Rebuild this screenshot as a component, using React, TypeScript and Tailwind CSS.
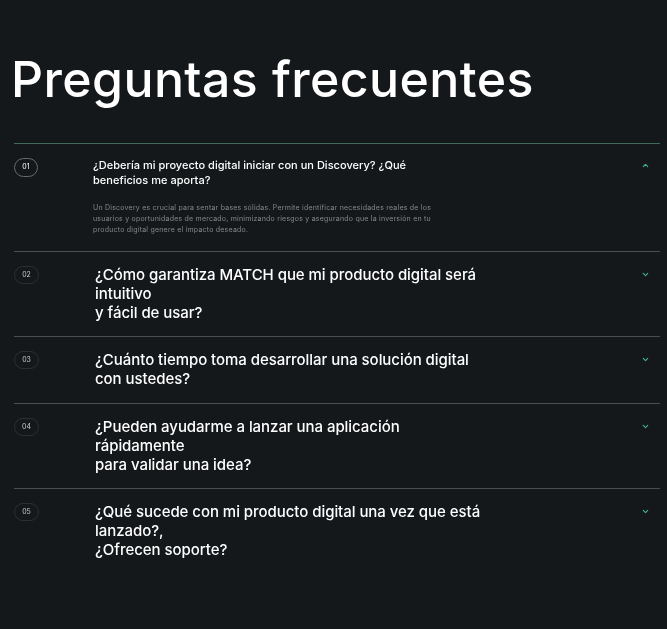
import { ChevronDown, ChevronUp } from 'lucide-react';

const FAQS = [
  { id: '02', lines: ['¿Cómo garantiza MATCH que mi producto digital será', 'intuitivo', 'y fácil de usar?'], h: 'h-[85px]' },
  { id: '03', lines: ['¿Cuánto tiempo toma desarrollar una solución digital', 'con ustedes?'], h: 'h-[67px]' },
  { id: '04', lines: ['¿Pueden ayudarme a lanzar una aplicación', 'rápidamente', 'para validar una idea?'], h: 'h-[85px]' },
  { id: '05', lines: ['¿Qué sucede con mi producto digital una vez que está', 'lanzado?,', '¿Ofrecen soporte?'], h: 'h-[85px]' },
];

export default function App() {
  return (
    <div className="w-[667px] h-[629px] overflow-hidden bg-[#14181b]">
      <div className="will-change-transform font-['Inter',sans-serif] text-white">
        <h1 className="pl-[11px] pt-[49px] h-[143px] text-[50px] leading-[60px] font-medium tracking-[0.4px]">Preguntas frecuentes</h1>

        <div className="ml-[14px] w-[646px]">
          <div className="h-[108px] border-t border-[#3d6b57] pt-[14px] flex">
            <div className="w-[79px] shrink-0">
              <span className="flex items-center justify-center w-6 h-[19px] rounded-full border border-[#666a6c] text-[7px]">01</span>
            </div>
            <div className="flex-1">
              <p className="text-[11px] leading-[15px] font-medium tracking-[0.02px]">¿Debería mi proyecto digital iniciar con un Discovery? ¿Qué<br />beneficios me aporta?</p>
              <p className="mt-[14px] text-[7px] leading-[11px] tracking-[0.22px] text-[#85888a]">
                Un Discovery es crucial para sentar bases sólidas. Permite identificar necesidades reales de los<br />
                usuarios y oportunidades de mercado, minimizando riesgos y asegurando que la inversión en tu<br />
                producto digital genere el impacto deseado.
              </p>
            </div>
            <ChevronUp size={9} strokeWidth={3} className="mt-[3px] mr-[10px] text-[#3fb58a]" />
          </div>

          {FAQS.map(({ id, lines, h }) => (
            <div key={id} className={`${h} border-t border-[#4a4d4f] pt-[13px] flex`}>
              <div className="w-[81px] shrink-0 pt-px">
                <span className="flex items-center justify-center w-[25px] h-[18px] rounded-full border border-[#2c3033] text-[7px] text-[#c9cacb]">{id}</span>
              </div>
              <div className="flex-1 text-[15px] leading-[19px] font-medium tracking-[-0.05px]">
                {lines.map((line) => (
                  <p key={line}>{line}</p>
                ))}
              </div>
              <ChevronDown size={9} strokeWidth={3} className="mt-[5px] mr-[10px] text-[#3fb58a]" />
            </div>
          ))}
        </div>
      </div>
    </div>
  );
}
